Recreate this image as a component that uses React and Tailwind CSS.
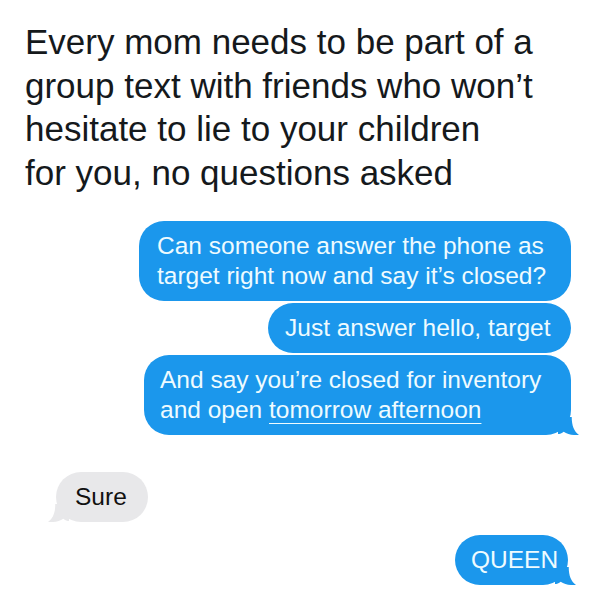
import React from 'react'

const BLUE = '#1b97ec'

const Tail = ({ side = 'right', color }) => (
    <svg
        viewBox="0 0 26 22"
        className={`absolute bottom-0 w-[21px] h-[18px] ${side === 'right' ? 'right-[-8px]' : 'left-[-8px] -scale-x-100'}`}
    >
        <path d="M0 0 H17 C17 11 20 18 26 22 C19 23 12 21 7 18 C5 20 2 21 0 21 Z" fill={color} />
    </svg>
)

const Bubble = ({ children, side = 'right', tail = false, className = '' }) => {
    const blue = side === 'right'
    return (
        <div
            className={`relative rounded-[25px] py-[10px] text-[24.5px] leading-[30px] ${blue ? 'bg-[#1b97ec] text-[#eefbff] self-end' : 'bg-[#e8e8ea] text-[#111] self-start'} ${className}`}
        >
            {tail && <Tail side={side} color={blue ? BLUE : '#e8e8ea'} />}
            <span className="relative">{children}</span>
        </div>
    )
}

export default function App() {
    return (
        <div className="h-[605px] w-[600px] overflow-hidden bg-white font-['Liberation_Sans',Arial,sans-serif]">
            <h1 className="pl-[25px] pt-[20px] text-[35px] leading-[43.5px] font-normal text-[#15191c]">
                Every mom needs to be part of a
                <br />
                group text with friends who won’t
                <br />
                hesitate to lie to your children
                <br />
                for you, no questions asked
            </h1>

            <div className="flex flex-col gap-[2px] pr-[29px] mt-[27px]">
                <Bubble className="w-[432px] pl-[18px]">
                    Can someone answer the phone as
                    <br />
                    target right now and say it’s closed?
                </Bubble>
                <Bubble className="w-[303px] pl-[17px]">Just answer hello, target</Bubble>
                <Bubble tail className="w-[427px] pl-[16px]">
                    And say you’re closed for inventory
                    <br />
                    and open{' '}
                    <span className="underline decoration-1 underline-offset-[5px]">tomorrow afternoon</span>
                </Bubble>
            </div>

            <div className="flex flex-col pl-[56px] pr-[32px] mt-[37px]">
                <Bubble side="left" tail className="w-[92px] pl-[19px]">
                    Sure
                </Bubble>
                <Bubble tail className="w-[113px] pl-[16px] mt-[13px]">
                    QUEEN
                </Bubble>
            </div>
        </div>
    )
}
